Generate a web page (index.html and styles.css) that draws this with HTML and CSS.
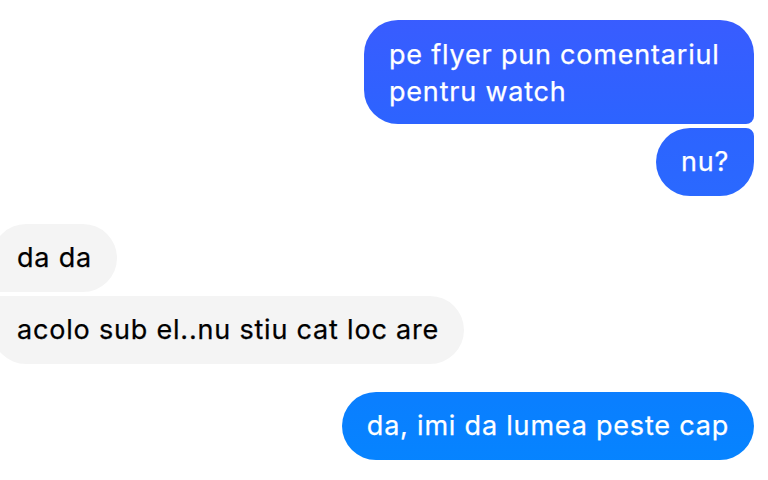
FILE: index.html
```html
<!DOCTYPE html>
<html>
<head>
<meta charset="utf-8">
<link rel="stylesheet" href="styles.css">
</head>
<body>
<div class="chat">
  <div class="group group-out">
    <div class="msg out first wrap">pe flyer pun comentariul pentru watch</div>
    <div class="msg out last">nu?</div>
  </div>
  <div class="group group-in">
    <div class="msg in first">da da</div>
    <div class="msg in last">acolo sub el..nu stiu cat loc are</div>
  </div>
  <div class="group group-out">
    <div class="msg out single">da, imi da lumea peste cap</div>
  </div>
</div>
</body>
</html>
```

FILE: styles.css
```css
html, body {
  margin: 0;
  padding: 0;
  background: #ffffff;
  overflow: hidden;
}
body {
  width: 768px;
  height: 480px;
  font-family: Inter, "Noto Sans", "Liberation Sans", sans-serif;
}
.chat {
  display: flex;
  flex-direction: column;
  gap: 28px;
  padding: 20px 14px 0 0;
}
.group {
  display: flex;
  flex-direction: column;
  gap: 4px;
}
.group-out {
  align-items: flex-end;
}
.group-in {
  align-items: flex-start;
  margin-left: -8px;
}
.msg {
  box-sizing: border-box;
  padding: 16px 25px 16px 25px;
  font-size: 27px;
  line-height: 37px;
  letter-spacing: 0.8px;
  border-radius: 34px;
  white-space: nowrap;
  -webkit-text-stroke: 0.25px currentColor;
}
.msg.wrap {
  white-space: normal;
  max-width: 390px;
  padding-bottom: 14px;
}
.out {
  color: #ffffff;
  background: linear-gradient(180deg, #3b5bff 0px, #2d63ff 120px, #2a69ff 200px, #0a7fff 400px, #0585ff 480px);
  background-attachment: fixed;
}
.in {
  color: #000000;
  background: #f4f4f4;
}
.single, .last, .in.first {
  padding-top: 15px;
  padding-bottom: 16px;
}
.out.first {
  border-bottom-right-radius: 8px;
}
.out.last {
  border-top-right-radius: 8px;
}
.in.first {
  border-bottom-left-radius: 8px;
}
.in.last {
  border-top-left-radius: 8px;
}
```
